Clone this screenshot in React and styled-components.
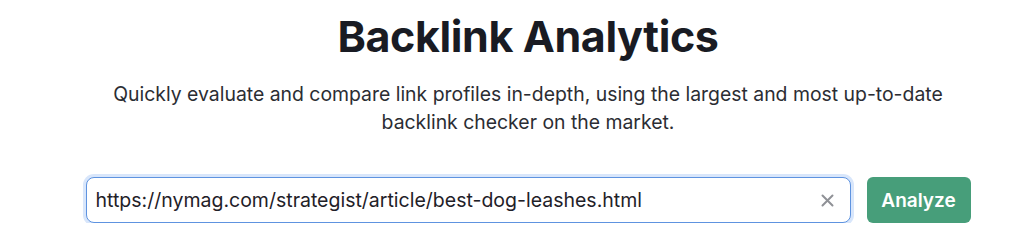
import React from 'react';
import styled, { createGlobalStyle } from 'styled-components';

const GlobalStyle = createGlobalStyle`
  body {
    margin: 0;
    background: #ffffff;
    font-family: Inter, "Noto Sans", sans-serif;
    color: #171a22;
  }
`;

const Page = styled.div`
  display: flex;
  justify-content: center;
  padding: 10px 0 0 32px;
`;

const Hero = styled.div`
  display: flex;
  flex-direction: column;
  align-items: center;
  width: 885px;
`;

const Title = styled.h1`
  margin: 0;
  font-size: 43px;
  line-height: 52px;
  font-weight: 700;
  letter-spacing: -0.4px;
  color: #191b23;
`;

const Lead = styled.p`
  margin: 18px 0 0;
  width: 860px;
  font-size: 19.4px;
  line-height: 28px;
  text-align: center;
  color: #2b2d33;
`;

const SearchRow = styled.form`
  display: flex;
  gap: 16px;
  width: 100%;
  margin-top: 41px;
`;

const Field = styled.div`
  display: flex;
  align-items: center;
  flex: 1;
  height: 46px;
  padding: 0 12px 0 9px;
  box-sizing: border-box;
  border: 1px solid #5e93e0;
  border-radius: 8px;
  box-shadow: 0 0 0 3px #d8e6fb;
  background: #fff;
`;

const Input = styled.input`
  flex: 1;
  border: 0;
  padding: 0;
  outline: none;
  font-family: Inter, "Noto Sans", sans-serif;
  font-size: 19.5px;
  color: #1f2128;
  background: transparent;
`;

const Clear = styled.button`
  display: flex;
  align-items: center;
  justify-content: center;
  width: 20px;
  height: 20px;
  padding: 0;
  border: 0;
  background: none;
  color: #8f9196;
  cursor: pointer;
`;

const Submit = styled.button`
  width: 104px;
  height: 46px;
  padding: 0;
  border: 0;
  border-radius: 6px;
  background: #479e7a;
  color: #fff;
  font-family: Inter, "Noto Sans", sans-serif;
  font-size: 19px;
  font-weight: 600;
  cursor: pointer;
`;

export default function App() {
  return (
    <>
      <GlobalStyle />
      <Page>
        <Hero>
          <Title>Backlink Analytics</Title>
          <Lead>
            Quickly evaluate and compare link profiles in-depth, using the largest and most up-to-date
            backlink checker on the market.
          </Lead>
          <SearchRow onSubmit={(e) => e.preventDefault()}>
            <Field>
              <Input defaultValue="https://nymag.com/strategist/article/best-dog-leashes.html" />
              <Clear type="button" aria-label="Clear">
                <svg width="13" height="13" viewBox="0 0 13 13" fill="none" stroke="currentColor" strokeWidth="2" strokeLinecap="round">
                  <path d="M1.5 1.5l10 10M11.5 1.5l-10 10" />
                </svg>
              </Clear>
            </Field>
            <Submit type="submit">Analyze</Submit>
          </SearchRow>
        </Hero>
      </Page>
    </>
  );
}
